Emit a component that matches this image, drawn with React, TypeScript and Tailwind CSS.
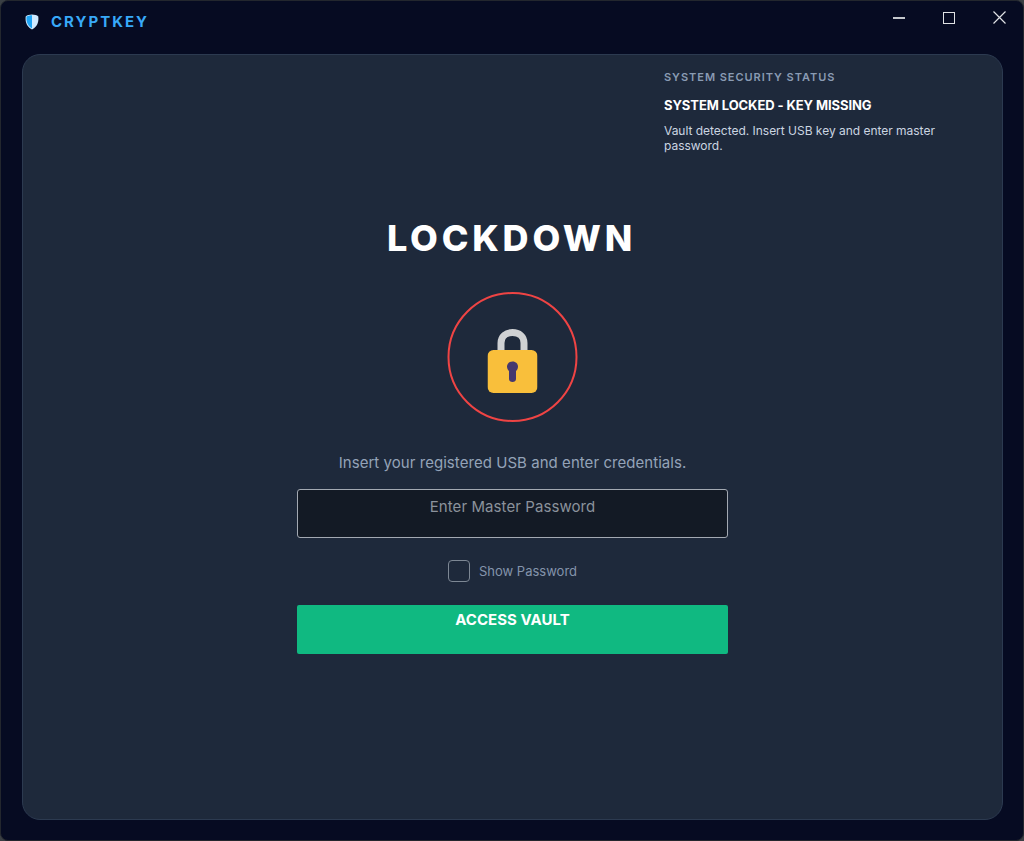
import React from 'react';

const ShieldLogo = () => (
  <svg width="14" height="16" viewBox="0 0 14 16">
    <path d="M7 0.5 C9.5 0.5 12 1.2 13.3 2.4 C13.8 7 13 12 7 15.5 C1 12 0.2 7 0.7 2.4 C2 1.2 4.5 0.5 7 0.5 Z" fill="#cfeaff" />
    <path d="M7 1.3 C5 1.3 3 1.8 1.5 2.8 C1.2 7 2 11.5 7 14.5 Z" fill="#1fa5f5" />
  </svg>
);

const Padlock = () => (
  <svg width="50" height="64" viewBox="0 0 50 64" className="mt-[8px]">
    <path d="M13.5 24 V14 C13.5 7.5 18.5 3.5 25 3.5 C31.5 3.5 36.5 7.5 36.5 14 V24" fill="none" stroke="#cfd1d3" strokeWidth="7" />
    <rect x="0" y="21" width="50" height="43" rx="6" fill="#f9bf3b" />
    <path d="M25 32.5 C28.5 32.5 30.5 35 30.5 37.5 C30.5 39.5 29.5 41 28.5 42 L28.5 50 C28.5 52 27 53 25 53 C23 53 21.5 52 21.5 50 L21.5 42 C20.5 41 19.5 39.5 19.5 37.5 C19.5 35 21.5 32.5 25 32.5 Z" fill="#46386f" />
  </svg>
);

const App = () => {
  return (
    <div className="h-[841px] w-[1024px] bg-[#3a3f44] font-['Inter',sans-serif]">
      <div className="flex h-full w-full flex-col rounded-lg border border-[#23272e] bg-[#060b22]">
        {/* title bar */}
        <div className="flex h-[53px] shrink-0 items-start justify-between">
          <div className="flex items-center gap-[12px] pl-[24px] pt-[12px]">
            <ShieldLogo />
            <span className="text-[15px] font-bold leading-[17px] tracking-[2px] text-[#38a9f8]">CRYPTKEY</span>
          </div>
          <div className="flex items-center gap-[38px] pr-[17px] pt-[10px]">
            <div className="h-[2px] w-[12px] bg-[#c4c7cc]" />
            <div className="h-[12px] w-[12px] border-[1.5px] border-[#dfe1e4]" />
            <svg width="13" height="13" viewBox="0 0 13 13" stroke="#dfe1e4" strokeWidth="1.2">
              <path d="M0.5 0.5 L12.5 12.5 M12.5 0.5 L0.5 12.5" />
            </svg>
          </div>
        </div>

        {/* main card */}
        <div className="ml-[21px] mr-[20px] flex h-[766px] flex-col rounded-[18px] border border-[#2c3a50] bg-[#1e293b]">
          <div className="flex justify-end pr-[41px] pt-[15px]">
            <div className="w-[297px]">
              <p className="text-[11px] font-semibold leading-[14px] tracking-[0.96px] text-[#8a9bb3]">SYSTEM SECURITY STATUS</p>
              <p className="mt-[14px] text-[13px] font-bold leading-[15px] tracking-[-0.08px] text-white">SYSTEM LOCKED - KEY MISSING</p>
              <p className="mt-[11px] text-xs leading-[14.5px] tracking-[-0.02px] text-[#cbd5e1]">
                Vault detected. Insert USB key and enter master password.
              </p>
            </div>
          </div>

          <div className="flex flex-col items-center">
            <h1 className="mt-[63px] -translate-x-[1px] text-4xl font-extrabold leading-[44px] tracking-[3.8px] text-white">LOCKDOWN</h1>
            <div className="mt-[32px] flex h-[130px] w-[130px] -translate-x-[0.5px] items-center justify-center rounded-full border-2 border-[#ef4444]">
              <Padlock />
            </div>
            <p className="mt-[31px] text-[15px] leading-[20px] tracking-[0.05px] text-[#94a3b8]">Insert your registered USB and enter credentials.</p>
            <div className="mt-[16px] flex h-[49px] w-[431px] justify-center rounded-[3px] border border-[#a3a9b2] bg-[#131a25] pt-[7px]">
              <span className="text-[15px] leading-[20px] tracking-[0.08px] text-[#8b929c]">Enter Master Password</span>
            </div>
            <div className="mt-[22px] flex items-center gap-[9px]">
              <div className="h-[22px] w-[22px] rounded-[4px] border border-[#7d8794]" />
              <span className="text-[13px] leading-[16px] text-[#8494ab]">Show Password</span>
            </div>
            <div className="mt-[23px] flex h-[49px] w-[431px] justify-center rounded-[2px] bg-[#10b981] pt-[5px]">
              <span className="text-[15px] font-bold leading-[20px] tracking-[0.05px] text-white">ACCESS VAULT</span>
            </div>
          </div>
        </div>
      </div>
    </div>
  );
};

export default App;
